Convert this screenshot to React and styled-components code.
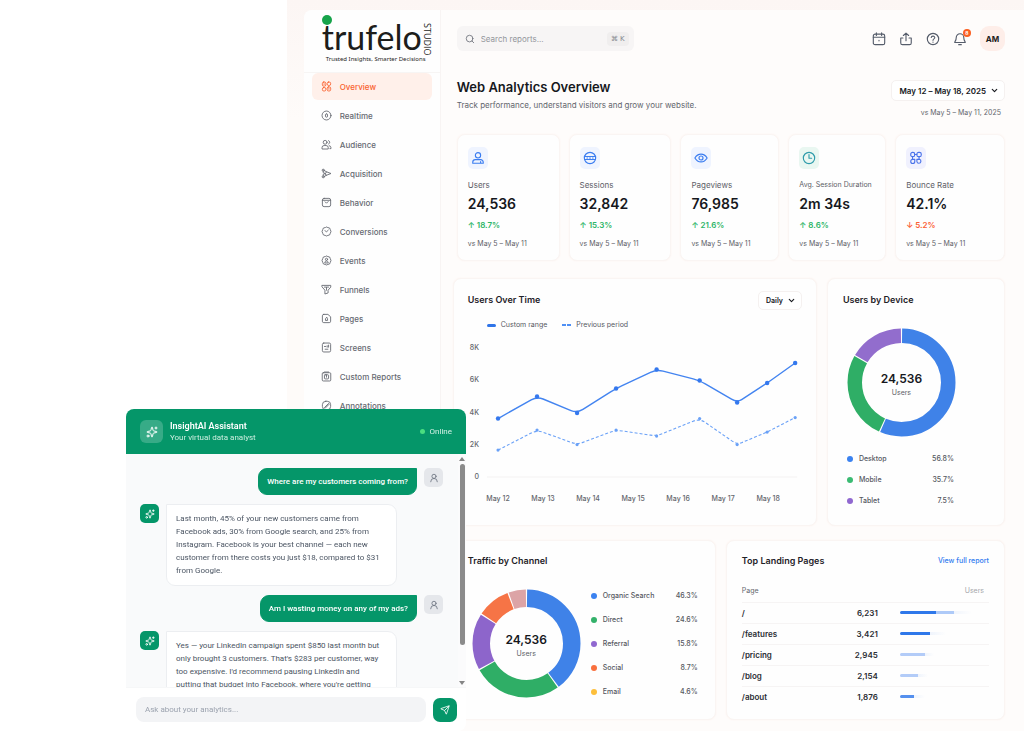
import React from 'react';
import styled, { createGlobalStyle, css } from 'styled-components';
import { ChevronDown, Search, Send, Sparkles, UserRound } from 'lucide-react';

const GlobalStyle = createGlobalStyle`
* {
    box-sizing: border-box;
}
body {
    margin: 0;
    background: #ffffff;
    color: #16181d;
    font-family: Inter, "Liberation Sans", sans-serif;
    font-size: 8px;
    line-height: 12px;
}
button, input, select {
    font-family: inherit;
    font-size: inherit;
    color: inherit;
}
h1, h2, p, ul, dl, dd {
    margin: 0;
    padding: 0;
}
ul {
    list-style: none;
}
`;

/* ---------- shell ---------- */

const Backdrop = styled.div`
    margin-left: 28vw;
    min-height: 100vh;
    padding: 10px 0 0 17px;
    background: linear-gradient(#fcf6f4, #fefbf9 120px);
`;

const Frame = styled.div`
    display: flex;
    min-height: calc(100vh - 10px);
    border-top-left-radius: 8px;
    background: #fefcfb;
    overflow: hidden;
`;

const Sidebar = styled.aside`
    flex: 0 0 137px;
    background: #fefefe;
    border-right: 1px solid #f8f4f3;
`;

const Main = styled.main`
    flex: 1;
    min-width: 0;
    padding: 16px 19px 10px 12px;
`;

/* ---------- logo ---------- */

const Logo = styled.a`
    display: block;
    position: relative;
    height: 63px;
    padding: 9px 0 0 18px;
    color: #1d1d1b;
    text-decoration: none;
    border-bottom: 1px solid #f7f5f4;
    &::before {
        content: '';
        position: absolute;
        top: 5px;
        left: 18px;
        width: 10px;
        height: 10px;
        border-radius: 50%;
        background: #16a34a;
    }
`;

const LogoRow = styled.div`
    display: flex;
    align-items: center;
    height: 36px;
`;

const LogoName = styled.span`
    font-family: Lato, sans-serif;
    font-size: 34px;
    line-height: 36px;
`;

const LogoSide = styled.span`
    writing-mode: vertical-rl;
    padding-top: 5px;
    font-family: "Open Sans", sans-serif;
    font-size: 9px;
    line-height: 10px;
`;

const LogoTag = styled.div`
    padding-left: 4px;
    font-family: "Noto Sans", sans-serif;
    font-size: 6px;
    line-height: 8px;
    white-space: nowrap;
`;

/* ---------- sidebar nav ---------- */

const NavList = styled.ul`
    display: flex;
    flex-direction: column;
    gap: 2px;
    padding: 0 8px;
`;

const NavLink = styled.a`
    display: flex;
    align-items: center;
    gap: 8px;
    height: 27px;
    padding: 0 9px;
    border-radius: 6px;
    text-decoration: none;
    font-size: 8px;
    font-weight: 500;
    color: ${({ $active }) => ($active ? '#f9622f' : '#666a72')};
    background: ${({ $active }) => ($active ? '#fff0ea' : 'transparent')};
`;

const Glyph = styled.svg`
    flex: none;
    width: ${({ $size }) => $size || 11}px;
    height: ${({ $size }) => $size || 11}px;
    fill: none;
    stroke: currentColor;
    stroke-width: 1.3;
    stroke-linecap: round;
    stroke-linejoin: round;
`;

const icons = {
    overview: <><rect x="2" y="1.5" width="5" height="6" rx="2" /><rect x="9" y="1.5" width="5" height="5" rx="2" /><rect x="2" y="9.5" width="5" height="5" rx="2" /><rect x="9" y="8.5" width="5" height="6" rx="2" /><path d="M4.5 4v1M11.5 11v1" /></>,
    realtime: <><circle cx="8" cy="8" r="6.5" /><rect x="6.5" y="5.5" width="3" height="5" rx="1.5" /></>,
    audience: <><circle cx="6" cy="4.8" r="2.8" /><path d="M1.5 14v-1.5a3 3 0 0 1 3-3h3a3 3 0 0 1 3 3V14zM11 2.3a2.7 2.7 0 0 1 0 5M12 9.7a3 3 0 0 1 2.5 3V14h-1.5" /></>,
    acquisition: <><circle cx="3.2" cy="3.2" r="1.5" /><circle cx="3.2" cy="12.8" r="1.5" /><path d="M3.2 4.8v2l3 1.2-3 1.2v2M6.5 8 8 5.5 14.5 8 8 10.5zM4.7 3.7 8 5.5M4.7 12.3 8 10.5" /></>,
    behavior: <><rect x="2" y="2" width="12" height="12" rx="2.5" /><path d="M2 4.8h12M6 7l2 2 2.5-2.5" /></>,
    conversions: <><path d="m8 1.5 2 .8 2.5.6 1 2.4 1 2.7-1 2.6-1 2.4-2.5.7-2 .8-2-.8-2.5-.7-1-2.4-1-2.6 1-2.7 1-2.4L6 2.3z" /><path d="m5.8 6.5 2 2.2 2.8-2.7" /></>,
    events: <><path d="m8 1.5 2 .8 2.5.6 1 2.4 1 2.7-1 2.6-1 2.4-2.5.7-2 .8-2-.8-2.5-.7-1-2.4-1-2.6 1-2.7 1-2.4L6 2.3z" /><circle cx="8" cy="6.3" r="1.6" /><path d="M5.5 11c0-3.3 5-3.3 5 0z" /></>,
    funnels: <path d="M1.8 2h12.4v2.5L10.3 9v4l-4.6 1.5V9L1.8 4.5zM5 4.5h6M8 5v4" />,
    pages: <><path d="M4 2h6l4 3.5V12a2 2 0 0 1-2 2H4a2 2 0 0 1-2-2V4a2 2 0 0 1 2-2z" /><path d="M8 6.5 6.5 8.6v2.2h3V8.6z" /></>,
    screens: <><rect x="2" y="1.5" width="12" height="13" rx="2" /><path d="M5 6.5h2M9 5.5v2M11 4.5v3M6 10.5h4" /></>,
    reports: <><rect x="1.8" y="2.5" width="12.4" height="12" rx="1.5" /><rect x="5" y="5.5" width="6" height="6" rx="1" /><path d="M5 1.5h6M8 5.5V9" /></>,
    annotations: <><rect x="2" y="1.8" width="12" height="12.5" rx="5" /><path d="m5 11 6-6 .8 1.2L6 12" /></>,
    calendar: <><rect x="1.5" y="2.5" width="13" height="12" rx="2" /><path d="M1.5 6h13M5 1v3M11 1v3M8 9.5v.6" /></>,
    share: <><path d="M8 10V1.5M5 4l3-2.7L11 4M4.5 6.8H2v5.7a2 2 0 0 0 2 2h8a2 2 0 0 0 2-2V6.8h-2.5" /></>,
    help: <><circle cx="8" cy="8" r="6.5" /><path d="M6 6.3c.2-2.3 4.2-2 4 .2C9.9 8 8 7.8 8 9.5M8 11.5v.2" /></>,
    bell: <><path d="M8 2a4.3 4.3 0 0 0-4.3 4.3C3.7 10 2 10.5 2 12h12c0-1.5-1.7-2-1.7-5.7A4.3 4.3 0 0 0 8 2zM6.5 14.5h3" /></>,
    users: <><circle cx="8" cy="4.8" r="3" /><path d="M2 14v-1.2a3 3 0 0 1 3-3h6a3 3 0 0 1 3 3V14zM11 12v2" /></>,
    sessions: <><circle cx="8" cy="8" r="6.5" /><path d="M2 6.3h12M2 9.7h12M4.5 8h.8M7.5 8h1M10.8 8h.8" /></>,
    views: <><path d="M1 8c3.5-6 10.5-6 14 0-3.5 6-10.5 6-14 0z" /><circle cx="8" cy="8" r="2.3" /></>,
    clock: <><circle cx="8" cy="8" r="6.5" /><path d="M8 4v4.3h3" /></>,
    bounce: <><rect x="2" y="1.5" width="4.5" height="5" rx="2" /><rect x="9" y="1.5" width="5" height="5" rx="2" /><path d="M4 6.5v3M6.5 4H9M2 12a2.3 2.3 0 1 0 4.6 0V9.5H4.3A2.3 2.3 0 0 0 2 12zM9 9.5h3a2.3 2.3 0 1 1-3 2.5zM11.5 6.5v3" /></>,
};

function Icon({ name, size }) {
    return (
        <Glyph viewBox="0 0 16 16" $size={size} aria-hidden="true">
            {icons[name]}
        </Glyph>
    );
}

const navItems = [
    ['overview', 'Overview'],
    ['realtime', 'Realtime'],
    ['audience', 'Audience'],
    ['acquisition', 'Acquisition'],
    ['behavior', 'Behavior'],
    ['conversions', 'Conversions'],
    ['events', 'Events'],
    ['funnels', 'Funnels'],
    ['pages', 'Pages'],
    ['screens', 'Screens'],
    ['reports', 'Custom Reports'],
    ['annotations', 'Annotations'],
];

/* ---------- top bar ---------- */

const TopBar = styled.header`
    display: flex;
    align-items: center;
    justify-content: space-between;
    padding-left: 4px;
`;

const SearchBox = styled.label`
    display: flex;
    align-items: center;
    gap: 6px;
    width: 177px;
    height: 25px;
    padding: 0 5px 0 8px;
    border-radius: 6px;
    background: #f7f5f5;
    color: #6b6f78;
    input {
        flex: 1;
        min-width: 0;
        border: 0;
        padding: 0;
        outline: 0;
        background: none;
    }
    input::placeholder {
        color: #93969c;
    }
`;

const Kbd = styled.kbd`
    padding: 1px 4px;
    border-radius: 4px;
    background: #f0eeee;
    color: #85888e;
    font-family: "DejaVu Sans", sans-serif;
    font-size: 7px;
`;

const Actions = styled.div`
    display: flex;
    align-items: center;
    gap: 13px;
`;

const IconButton = styled.button`
    display: flex;
    position: relative;
    padding: 0;
    border: 0;
    background: none;
    color: #565d6b;
`;

const Badge = styled.span`
    position: absolute;
    top: -3px;
    right: -4px;
    width: 8px;
    height: 8px;
    border-radius: 50%;
    background: #fb5f22;
    color: #fff;
    font-size: 5px;
    line-height: 8px;
    font-weight: 700;
    text-align: center;
`;

const Avatar = styled.button`
    width: 25px;
    height: 25px;
    padding: 0;
    border: 0;
    border-radius: 9px;
    background: #feeee9;
    color: #1d1d20;
    font-weight: 700;
`;

const PageHead = styled.div`
    display: flex;
    justify-content: space-between;
    margin: 29px 0 15px;
    padding-left: 4px;
    h1 {
        font-size: 13px;
        line-height: 15px;
        font-weight: 600;
    }
    p {
        margin-top: 4px;
        color: #63666d;
    }
`;

const DateRange = styled.div`
    display: flex;
    flex-direction: column;
    align-items: flex-end;
    gap: 6px;
    span {
        padding-right: 4px;
        color: #63666d;
        font-size: 7px;
    }
`;

const DropButton = styled.button`
    display: flex;
    align-items: center;
    gap: 4px;
    height: ${({ $small }) => ($small ? 19 : 21)}px;
    padding: 0 5px 0 7px;
    border: 1px solid #f5f1f0;
    border-radius: 5px;
    background: #fff;
    font-size: ${({ $small }) => ($small ? 7 : 8)}px;
    font-weight: 600;
`;

/* ---------- cards ---------- */

const card = css`
    min-width: 0;
    border: 1px solid #faf5f3;
    border-radius: 8px;
    background: #fefefe;
    box-shadow: 0 0 2px #fdf3ef;
`;

const KpiGrid = styled.section`
    display: grid;
    grid-template-columns: 103fr 103fr 99fr 98fr 110fr;
    gap: 9px;
    padding-left: 4px;
`;

const KpiCard = styled.article`
    ${card}
    padding: 12px 0 10px 10px;
    white-space: nowrap;
`;

const KpiIcon = styled.div`
    display: flex;
    align-items: center;
    justify-content: center;
    width: 20px;
    height: 22px;
    border-radius: 5px;
    color: ${({ $tone }) => $tone[0]};
    background: ${({ $tone }) => $tone[1]};
`;

const KpiLabel = styled.h2`
    margin-top: 10px;
    font-size: ${({ $small }) => ($small ? 7 : 8)}px;
    font-weight: 400;
    color: #5d6067;
`;

const KpiValue = styled.p`
    margin-top: 3px;
    font-size: 14px;
    line-height: 20px;
    font-weight: 600;
`;

const KpiChange = styled.p`
    margin-top: 5px;
    font-size: 8px;
    font-weight: 600;
    color: ${({ $down }) => ($down ? '#fb5f35' : '#2db567')};
`;

const KpiNote = styled.p`
    margin-top: 7px;
    font-size: 7px;
    color: #5d6067;
`;

const kpis = [
    { icon: 'users', label: 'Users', value: '24,536', change: '↑ 18.7%', tone: ['#3b7df0', '#eff4ff'] },
    { icon: 'sessions', label: 'Sessions', value: '32,842', change: '↑ 15.3%', tone: ['#3b7df0', '#eff4ff'] },
    { icon: 'views', label: 'Pageviews', value: '76,985', change: '↑ 21.6%', tone: ['#3b7df0', '#eff4ff'] },
    { icon: 'clock', label: 'Avg. Session Duration', value: '2m 34s', change: '↑ 8.6%', tone: ['#2f9cab', '#e9f7f1'], small: true },
    { icon: 'bounce', label: 'Bounce Rate', value: '42.1%', change: '↓ 5.2%', tone: ['#4a73ea', '#f0f1fe'], down: true },
];

const ChartRow = styled.div`
    display: grid;
    grid-template-columns: ${({ $cols }) => $cols};
    gap: 10px;
    margin-top: ${({ $top }) => $top}px;
`;

const Panel = styled.section`
    ${card}
    padding: ${({ $pad }) => $pad};
`;

const PanelHead = styled.div`
    display: flex;
    align-items: center;
    justify-content: space-between;
    height: 20px;
    h2 {
        font-size: 9px;
        font-weight: 600;
        color: #1f2228;
    }
    a {
        color: #2f7bf0;
        font-size: 7px;
        font-weight: 500;
        text-decoration: none;
    }
`;

/* ---------- line chart ---------- */

const ChartLegend = styled.div`
    display: flex;
    gap: 15px;
    margin: 9px 0 10px 19px;
    font-size: 7px;
    color: #55585f;
    span {
        display: flex;
        align-items: center;
        gap: 5px;
    }
`;

const Swatch = styled.i`
    width: 9px;
    height: ${({ $dashed }) => ($dashed ? 2 : 3)}px;
    border-radius: ${({ $dashed }) => ($dashed ? 0 : 2)}px;
    background: ${({ $dashed }) => ($dashed
        ? 'repeating-linear-gradient(90deg, #4f90f5 0 4px, transparent 4px 5px)'
        : '#2f74e8')};
`;

const LineSvg = styled.svg`
    display: block;
    width: 100%;
    text {
        font-size: 7px;
        font-weight: 500;
        fill: #63666d;
    }
`;

const xs = [30, 69, 109, 148, 188.5, 231.5, 269, 299, 327];
const currentYs = [77.5, 55.5, 72, 47.5, 28.5, 39.5, 61.5, 42, 22];
const previousYs = [109, 89, 103.5, 89, 95, 77.5, 103.5, 91, 76.5];
const yTicks = ['8K', '6K', '4K', '2K', '0'];
const days = ['May 12', 'May 13', 'May 14', 'May 15', 'May 16', 'May 17', 'May 18'];

// straight runs with the corners rounded off at every point
function smooth(ys) {
    let d = `M${xs[0]} ${ys[0]}`;
    for (let i = 1; i < xs.length - 1; i++) {
        const toward = (j) => [xs[i] + (xs[j] - xs[i]) * 0.15, ys[i] + (ys[j] - ys[i]) * 0.15];
        d += ` L${toward(i - 1)} Q${xs[i]},${ys[i]} ${toward(i + 1)}`;
    }
    return `${d} L${xs[xs.length - 1]} ${ys[ys.length - 1]}`;
}

function LineChart() {
    return (
        <LineSvg viewBox="0 0 334 166" role="img" aria-label="Users over time">
            {yTicks.map((t, i) => (
                <text key={t} x="11" y={9 + i * 32.3} textAnchor="end">{t}</text>
            ))}
            <path d="M19 136h310" stroke="#f3f2f2" />
            <path d={smooth(previousYs)} fill="none" stroke="#6aa1f7" strokeWidth="1.1" strokeDasharray="3 2" />
            <path d={smooth(currentYs)} fill="none" stroke="#4384f0" strokeWidth="1.4" />
            {xs.map((x, i) => (
                <g key={x}>
                    <circle cx={x} cy={previousYs[i]} r="1.6" fill="#6aa1f7" />
                    <circle cx={x} cy={currentYs[i]} r="2.2" fill="#3478ee" />
                </g>
            ))}
            {days.map((d, i) => (
                <text key={d} x={30 + i * 45} y="160" textAnchor="middle">{d}</text>
            ))}
        </LineSvg>
    );
}

/* ---------- donuts ---------- */

const DonutWrap = styled.div`
    display: grid;
    flex: none;
    width: 109px;
    height: 109px;
    svg, div {
        grid-area: 1 / 1;
    }
    div {
        align-self: center;
        padding-top: 4px;
        text-align: center;
        font-size: 7px;
        color: #5d6067;
    }
    strong {
        display: block;
        margin-bottom: 1px;
        font-size: 12px;
        line-height: 15px;
        font-weight: 600;
        color: #16181d;
    }
`;

function Donut({ slices, thickness }) {
    const r = 54 - thickness / 2;
    return (
        <DonutWrap>
            <svg viewBox="-54.5 -54.5 109 109" aria-hidden="true">
                <g transform="rotate(-90)" fill="none" strokeWidth={thickness}>
                    {slices.map(([color, from, to]) => (
                        <circle
                            key={color}
                            r={r}
                            pathLength="360"
                            stroke={color}
                            strokeDasharray={`${to - from - 1.4} 360`}
                            strokeDashoffset={-(from + 0.7)}
                        />
                    ))}
                </g>
            </svg>
            <div>
                <strong>24,536</strong>
                Users
            </div>
        </DonutWrap>
    );
}

const Legend = styled.ul`
    display: flex;
    flex-direction: column;
    gap: ${({ $gap }) => $gap}px;
    width: 107px;
    font-size: 7px;
    font-weight: 500;
    color: #55585f;
    li {
        display: flex;
        align-items: center;
        gap: 6px;
    }
    b {
        margin-left: auto;
        font-weight: 500;
    }
`;

const Dot = styled.i`
    width: 6px;
    height: 6px;
    border-radius: 50%;
    background: ${({ $color }) => $color};
`;

function LegendList({ items, gap }) {
    return (
        <Legend $gap={gap}>
            {items.map(([color, label, value]) => (
                <li key={label}>
                    <Dot $color={color} />
                    {label}
                    <b>{value}</b>
                </li>
            ))}
        </Legend>
    );
}

const DeviceBody = styled.div`
    display: flex;
    flex-direction: column;
    gap: 16px;
    padding: 18px 0 0 4px;
`;

const ChannelBody = styled.div`
    display: flex;
    align-items: center;
    gap: 10px;
    padding: 18px 0 0 4px;
`;

const devices = [
    ['#3b82f0', 'Desktop', '56.8%'],
    ['#3bbb73', 'Mobile', '35.7%'],
    ['#9068d0', 'Tablet', '7.5%'],
];
const deviceSlices = [['#3f82e8', 0, 204], ['#2fae66', 204, 300], ['#926dcd', 300, 360]];

const channels = [
    ['#3b82f0', 'Organic Search', '46.3%'],
    ['#33b16a', 'Direct', '24.6%'],
    ['#9068d0', 'Referral', '15.8%'],
    ['#f9703e', 'Social', '8.7%'],
    ['#fdbf3b', 'Email', '4.6%'],
];
const channelSlices = [
    ['#3f82e8', 0, 144],
    ['#2fae66', 144, 241],
    ['#8d65cb', 241, 303],
    ['#f67446', 303, 340],
    ['#dca4a6', 340, 360],
];

/* ---------- landing pages ---------- */

const PageTable = styled.table`
    width: 100%;
    margin-top: 10px;
    border-collapse: collapse;
    font-size: 8px;
    font-weight: 600;
    color: #2a2d33;
    th, td {
        padding: 0;
        height: 21px;
        text-align: left;
        border-bottom: 1px solid #f6f4f4;
    }
    tr:last-child td {
        border-bottom: 0;
    }
    th {
        font-size: 7px;
        font-weight: 400;
        color: #63666d;
    }
    th:last-child {
        padding-right: 5px;
        text-align: right;
        color: #a5a7ab;
    }
    td:nth-child(2) {
        text-align: right;
    }
    td:last-child {
        width: 45%;
        padding-left: 22px;
    }
`;

const Bar = styled.div`
    display: flex;
    height: 3px;
    border-radius: 2px;
    overflow: hidden;
`;

const BarPart = styled.span`
    background: ${({ $color }) => $color};
`;

const landing = [
    ['/', '6,231', [['#2f78ea', 41], ['#aecaf8', 20], ['linear-gradient(90deg, #f1f5fc, #fefefe)', 20]]],
    ['/features', '3,421', [['#2f78ea', 34], ['linear-gradient(90deg, #eff4fc, #fefefe)', 18]]],
    ['/pricing', '2,945', [['#b3ccf8', 28], ['linear-gradient(90deg, #eff4fc, #fefefe)', 10]]],
    ['/blog', '2,154', [['#b3ccf8', 20], ['linear-gradient(90deg, #eff4fc, #fefefe)', 12]]],
    ['/about', '1,876', [['#5590ee', 16], ['linear-gradient(90deg, #eff4fc, #fefefe)', 12]]],
];

/* ---------- chat ---------- */

const Chat = styled.aside`
    position: fixed;
    bottom: 0;
    left: 126px;
    display: flex;
    flex-direction: column;
    width: 340px;
    height: 322px;
    border-radius: 8px;
    background: #fff;
    overflow: hidden;
    font-family: Roboto, sans-serif;
`;

const ChatHead = styled.header`
    display: flex;
    align-items: center;
    gap: 7px;
    flex: 0 0 45px;
    padding: 0 14px;
    background: #059669;
    color: #fff;
    h2 {
        font-size: 9px;
        line-height: 12px;
        font-weight: 600;
    }
    p {
        color: #cdeee0;
    }
`;

const ChatMark = styled.div`
    display: flex;
    align-items: center;
    justify-content: center;
    width: 23px;
    height: 23px;
    border-radius: 6px;
    background: #37ab87;
`;

const Online = styled.span`
    display: flex;
    align-items: center;
    gap: 5px;
    margin-left: auto;
    color: #d5f2e6;
    i {
        width: 5px;
        height: 5px;
        border-radius: 50%;
        background: #4ade80;
    }
`;

const ChatBody = styled.div`
    display: flex;
    flex: 1;
    min-height: 0;
    background: #f9fafb;
`;

const Messages = styled.div`
    display: flex;
    flex: 1;
    flex-direction: column;
    gap: 9px;
    padding: 14px 15px 0 14px;
    overflow: hidden;
`;

const Message = styled.div`
    display: flex;
    flex: none;
    flex-direction: ${({ $mine }) => ($mine ? 'row-reverse' : 'row')};
    align-items: flex-start;
    gap: 7px;
`;

const Face = styled.div`
    display: flex;
    flex: none;
    align-items: center;
    justify-content: center;
    width: 19px;
    height: 19px;
    border-radius: 5px;
    color: ${({ $mine }) => ($mine ? '#6b7280' : '#ffffff')};
    background: ${({ $mine }) => ($mine ? '#e5e7eb' : '#059669')};
`;

const Bubble = styled.p`
    max-width: 231px;
    padding: ${({ $mine }) => ($mine ? '7px 8px' : '7px 12px 8px 9px')};
    border: 1px solid ${({ $mine }) => ($mine ? '#059669' : '#eceef1')};
    border-radius: ${({ $mine }) => ($mine ? '9px 0 9px 9px' : '0 9px 9px 9px')};
    background: ${({ $mine }) => ($mine ? '#059669' : '#ffffff')};
    color: ${({ $mine }) => ($mine ? '#ffffff' : '#4b5563')};
    font-weight: ${({ $mine }) => ($mine ? 500 : 400)};
    line-height: ${({ $mine }) => ($mine ? 11 : 13)}px;
`;

const ScrollTrack = styled.div`
    display: flex;
    flex-direction: column;
    align-items: center;
    justify-content: space-between;
    width: 8px;
    padding: 3px 0 2px;
    background: #fbfbfc;
    &::before, &::after {
        content: '';
        border: 3px solid transparent;
        border-top-width: 0;
        border-bottom: 4px solid #858585;
    }
    &::after {
        transform: rotate(180deg);
    }
`;

const ScrollThumb = styled.div`
    width: 5px;
    height: 181px;
    margin: 3px 0 auto;
    border-radius: 3px;
    background: #8b8b8b;
`;

const ChatForm = styled.form`
    display: flex;
    align-items: center;
    gap: 7px;
    flex: 0 0 44px;
    padding: 0 9px 0 10px;
    border-top: 1px solid #f6f7f8;
    input {
        flex: 1;
        min-width: 0;
        height: 25px;
        padding: 0 9px;
        border: 0;
        border-radius: 8px;
        outline: 0;
        background: #f3f4f6;
    }
    input::placeholder {
        color: #9ca3af;
    }
    button {
        display: flex;
        align-items: center;
        justify-content: center;
        width: 24px;
        height: 24px;
        padding: 0;
        border: 0;
        border-radius: 7px;
        background: #059669;
        color: #fff;
    }
`;

const messages = [
    { mine: true, text: 'Where are my customers coming from?' },
    { text: 'Last month, 45% of your new customers came from Facebook ads, 30% from Google search, and 25% from Instagram. Facebook is your best channel — each new customer from there costs you just $18, compared to $31 from Google.' },
    { mine: true, text: 'Am I wasting money on any of my ads?' },
    { text: 'Yes — your LinkedIn campaign spent $850 last month but only brought 3 customers. That\'s $283 per customer, way too expensive. I\'d recommend pausing LinkedIn and putting that budget into Facebook, where you\'re getting' },
];

function ChatWidget() {
    return (
        <Chat aria-label="InsightAI Assistant">
            <ChatHead>
                <ChatMark><Sparkles size={12} /></ChatMark>
                <div>
                    <h2>InsightAI Assistant</h2>
                    <p>Your virtual data analyst</p>
                </div>
                <Online><i />Online</Online>
            </ChatHead>
            <ChatBody>
                <Messages>
                    {messages.map(({ mine, text }) => (
                        <Message key={text} $mine={mine}>
                            <Face $mine={mine}>
                                {mine ? <UserRound size={10} /> : <Sparkles size={10} />}
                            </Face>
                            <Bubble $mine={mine}>{text}</Bubble>
                        </Message>
                    ))}
                </Messages>
                <ScrollTrack>
                    <ScrollThumb />
                </ScrollTrack>
            </ChatBody>
            <ChatForm onSubmit={(e) => e.preventDefault()}>
                <input aria-label="Ask about your analytics" placeholder="Ask about your analytics..." />
                <button type="submit" aria-label="Send"><Send size={10} /></button>
            </ChatForm>
        </Chat>
    );
}

export default function App() {
    return (
        <>
            <GlobalStyle />
            <Backdrop>
                <Frame>
                    <Sidebar>
                        <Logo href="#">
                            <LogoRow>
                                <LogoName>trufelo</LogoName>
                                <LogoSide>STUDIO</LogoSide>
                            </LogoRow>
                            <LogoTag>Trusted Insights, Smarter Decisions</LogoTag>
                        </Logo>
                        <nav>
                            <NavList>
                                {navItems.map(([icon, label], i) => (
                                    <li key={label}>
                                        <NavLink href="#" $active={i === 0}>
                                            <Icon name={icon} />
                                            {label}
                                        </NavLink>
                                    </li>
                                ))}
                            </NavList>
                        </nav>
                    </Sidebar>
                    <Main>
                        <TopBar>
                            <SearchBox>
                                <Search size={10} />
                                <input aria-label="Search reports" placeholder="Search reports..." />
                                <Kbd>⌘ K</Kbd>
                            </SearchBox>
                            <Actions>
                                <IconButton aria-label="Calendar"><Icon name="calendar" size={14} /></IconButton>
                                <IconButton aria-label="Share"><Icon name="share" size={14} /></IconButton>
                                <IconButton aria-label="Help"><Icon name="help" size={14} /></IconButton>
                                <IconButton aria-label="Notifications">
                                    <Icon name="bell" size={14} />
                                    <Badge>8</Badge>
                                </IconButton>
                                <Avatar>AM</Avatar>
                            </Actions>
                        </TopBar>
                        <PageHead>
                            <div>
                                <h1>Web Analytics Overview</h1>
                                <p>Track performance, understand visitors and grow your website.</p>
                            </div>
                            <DateRange>
                                <DropButton>May 12 – May 18, 2025 <ChevronDown size={9} strokeWidth={3} /></DropButton>
                                <span>vs May 5 – May 11, 2025</span>
                            </DateRange>
                        </PageHead>
                        <KpiGrid>
                            {kpis.map((k) => (
                                <KpiCard key={k.label}>
                                    <KpiIcon $tone={k.tone}><Icon name={k.icon} size={14} /></KpiIcon>
                                    <KpiLabel $small={k.small}>{k.label}</KpiLabel>
                                    <KpiValue>{k.value}</KpiValue>
                                    <KpiChange $down={k.down}>{k.change}</KpiChange>
                                    <KpiNote>vs May 5 – May 11</KpiNote>
                                </KpiCard>
                            ))}
                        </KpiGrid>
                        <ChartRow $cols="364fr 178fr" $top={17}>
                            <Panel $pad="11px 14px 18px">
                                <PanelHead>
                                    <h2>Users Over Time</h2>
                                    <DropButton $small>Daily <ChevronDown size={9} strokeWidth={3} /></DropButton>
                                </PanelHead>
                                <ChartLegend>
                                    <span><Swatch />Custom range</span>
                                    <span><Swatch $dashed />Previous period</span>
                                </ChartLegend>
                                <LineChart />
                            </Panel>
                            <Panel $pad="11px 15px">
                                <PanelHead><h2>Users by Device</h2></PanelHead>
                                <DeviceBody>
                                    <Donut slices={deviceSlices} thickness={14.5} />
                                    <LegendList items={devices} gap={9} />
                                </DeviceBody>
                            </Panel>
                        </ChartRow>
                        <ChartRow $cols="263fr 279fr" $top={14}>
                            <Panel $pad="10px 14px 21px">
                                <PanelHead><h2>Traffic by Channel</h2></PanelHead>
                                <ChannelBody>
                                    <Donut slices={channelSlices} thickness={17.5} />
                                    <LegendList items={channels} gap={12} />
                                </ChannelBody>
                            </Panel>
                            <Panel $pad="10px 15px 8px">
                                <PanelHead>
                                    <h2>Top Landing Pages</h2>
                                    <a href="#">View full report</a>
                                </PanelHead>
                                <PageTable>
                                    <thead>
                                        <tr><th>Page</th><th aria-label="Count" /><th>Users</th></tr>
                                    </thead>
                                    <tbody>
                                        {landing.map(([page, users, parts]) => (
                                            <tr key={page}>
                                                <td>{page}</td>
                                                <td>{users}</td>
                                                <td>
                                                    <Bar>
                                                        {parts.map(([color, share]) => (
                                                            <BarPart key={color} $color={color} style={{ width: `${share}%` }} />
                                                        ))}
                                                    </Bar>
                                                </td>
                                            </tr>
                                        ))}
                                    </tbody>
                                </PageTable>
                            </Panel>
                        </ChartRow>
                    </Main>
                </Frame>
            </Backdrop>
            <ChatWidget />
        </>
    );
}
